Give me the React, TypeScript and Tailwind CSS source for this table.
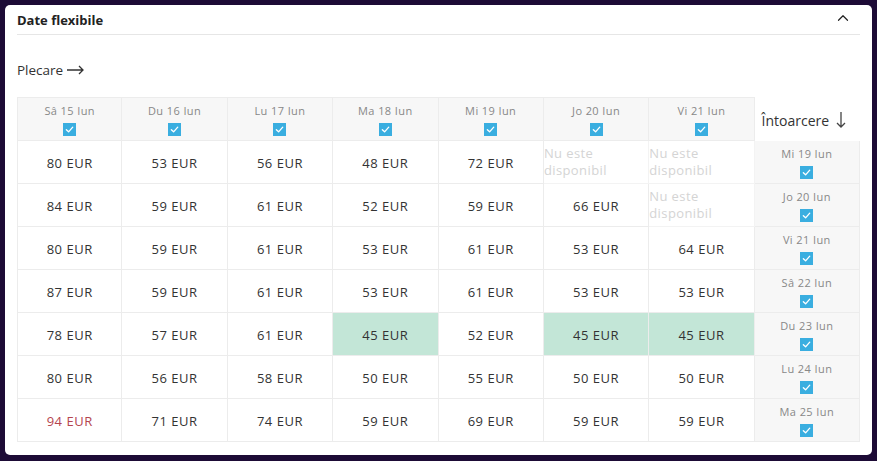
import { ChevronUp } from "lucide-react";

const departures = ["Sâ 15 Iun", "Du 16 Iun", "Lu 17 Iun", "Ma 18 Iun", "Mi 19 Iun", "Jo 20 Iun", "Vi 21 Iun"];
const returns = ["Mi 19 Iun", "Jo 20 Iun", "Vi 21 Iun", "Sâ 22 Iun", "Du 23 Iun", "Lu 24 Iun", "Ma 25 Iun"];

// null = nu este disponibil
const prices: (number | null)[][] = [
  [80, 53, 56, 48, 72, null, null],
  [84, 59, 61, 52, 59, 66, null],
  [80, 59, 61, 53, 61, 53, 64],
  [87, 59, 61, 53, 61, 53, 53],
  [78, 57, 61, 45, 52, 45, 45],
  [80, 56, 58, 50, 55, 50, 50],
  [94, 71, 74, 59, 69, 59, 59],
];

function Check() {
  return (
    <span className="flex h-[13px] w-[13px] items-center justify-center bg-[#3aaee0]">
      <svg width="9" height="9" viewBox="0 0 10 10" fill="none">
        <path d="M1.5 5.3 4 7.6 8.6 2.4" stroke="white" strokeWidth="1.5" strokeLinecap="round" strokeLinejoin="round" />
      </svg>
    </span>
  );
}

function PriceCell({ value }: { value: number | null }) {
  if (value === null) {
    return (
      <div className="flex h-[43px] flex-col justify-start pt-[4px] text-[13px] leading-[17px] tracking-[0.4px] text-[#d4d4d4] border-r border-b border-[#f3f3f3]">
        <span>Nu este</span>
        <span>disponibil</span>
      </div>
    );
  }
  const best = value === 45;
  const worst = value === 94;
  return (
    <div
      className={`flex h-[43px] items-center justify-center border-r border-b border-[#ececec] pt-[3px] text-[13px] tracking-[0.5px] ${
        best ? "bg-[#c3e6d7]" : "bg-white"
      } ${worst ? "text-[#b4454f]" : "text-[#333]"}`}
    >
      {value} EUR
    </div>
  );
}

export default function App() {
  return (
    <div className="min-h-[461px] bg-[#1d0b36] p-[5px] font-['Open_Sans',sans-serif]">
      <div className="h-[450px] w-[867px] rounded-[5px] bg-white px-3 pt-[3px]">
        <div className="flex h-[27px] items-center justify-between border-b border-[#e6e6e6] pr-2">
          <span className="text-[13px] font-bold text-[#222]">Date flexibile</span>
          <ChevronUp size={18} strokeWidth={1.6} className="mb-[6px] text-[#222]" />
        </div>

        <div className="mt-[26px] flex h-[18px] items-center gap-1 text-[13.5px] text-[#333]">
          Plecare
          <svg width="18" height="10" viewBox="0 0 18 10" fill="none">
            <path d="M0 5h16M12 1l4 4-4 4" stroke="#333" strokeWidth="1.3" />
          </svg>
        </div>

        <div className="mt-[18px] grid w-[843px] grid-cols-8">
          {departures.map((d) => (
            <div
              key={d}
              className="flex h-[44px] flex-col items-center justify-start gap-[5px] border-t border-r border-b border-[#ececec] bg-[#f7f7f7] pt-[6px] text-[11px] leading-[14px] tracking-[0.4px] text-[#888] first:border-l"
            >
              <span>{d}</span>
              <Check />
            </div>
          ))}
          <div className="flex h-[44px] items-center justify-center gap-[6px] pt-[2px] pr-[6px] text-[14px] text-[#333]">
            Întoarcere
            <svg width="12" height="18" viewBox="0 0 12 18" fill="none">
              <path d="M6 1v15M2 12l4 4 4-4" stroke="#444" strokeWidth="1.3" />
            </svg>
          </div>

          {prices.map((row, i) => (
            <div key={i} className="contents">
              {row.map((v, j) => (
                <div key={j} className="first:border-l first:border-[#ececec]">
                  <PriceCell value={v} />
                </div>
              ))}
              <div className="flex h-[43px] flex-col items-center justify-start gap-[5px] border-r border-b border-[#ececec] bg-[#f7f7f7] pt-[6px] text-[11px] leading-[14px] tracking-[0.4px] text-[#888]">
                <span>{returns[i]}</span>
                <Check />
              </div>
            </div>
          ))}
        </div>
      </div>
    </div>
  );
}
